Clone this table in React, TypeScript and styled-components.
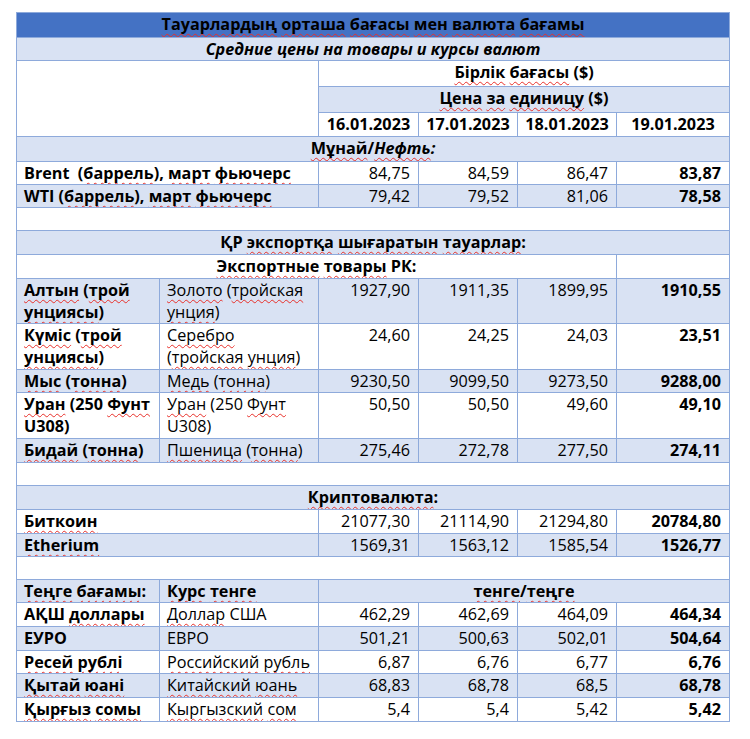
import React from "react";
import styled, { createGlobalStyle, css } from "styled-components";

const Global = createGlobalStyle`
  html, body { background: #ffffff; }
  body {
    margin: 12px 0 0 16px;
    font-family: "Open Sans", "Noto Sans", sans-serif;
    color: #000;
  }
`;

const Sheet = styled.div`
  display: grid;
  width: 714px;
  box-sizing: border-box;
  padding: 1px;
  gap: 1px;
  background: #8eaadb;
  grid-template-columns: 142px 158px 99px 98px 98px 112px;
  grid-template-rows: 24px 22px 25px 25px 23px 24px 22px 22px 22px 23px 23px 44px 45px 22px 45px 23px 22px 23px 23px 22px 22px 22px 23px 23px 22px 23px 23px;
  font-size: 16.2px;
  line-height: 22px;
`;

type Tone = "blue" | "light" | "white";

const tones: Record<Tone, string> = {
  blue: "#4472c4",
  light: "#d9e2f3",
  white: "#ffffff",
};

const Cell = styled.div<{
  $tone: Tone;
  $span?: number;
  $rows?: number;
  $align?: "left" | "center" | "right";
  $bold?: boolean;
  $italic?: boolean;
}>`
  background: ${(p) => tones[p.$tone]};
  grid-column: span ${(p) => p.$span ?? 1};
  grid-row: span ${(p) => p.$rows ?? 1};
  text-align: ${(p) => p.$align ?? "left"};
  font-weight: ${(p) => (p.$bold ? 700 : 400)};
  font-style: ${(p) => (p.$italic ? "italic" : "normal")};
  padding: 0 8px 0 7px;
  white-space: pre;
  overflow: hidden;
  min-width: 0;
  ${(p) =>
    p.$align === "center" &&
    css`
      padding: 0 2px;
    `}
`;

const Spell = styled.span`
  text-decoration-line: underline;
  text-decoration-style: wavy;
  text-decoration-color: #e8302a;
  text-decoration-thickness: 1px;
  text-underline-offset: 3px;
  text-decoration-skip-ink: none;
`;

const Ital = styled.span`
  font-style: italic;
`;

function marked(text: string): React.ReactNode[] {
  return text.split(/~([^~]+)~/).map((part, i) =>
    i % 2 === 1 ? <Spell key={i}>{part}</Spell> : <React.Fragment key={i}>{part}</React.Fragment>
  );
}

type PriceRow = { tone: Tone; values: string[] };

function Values({ tone, values }: PriceRow) {
  return (
    <>
      {values.map((v, i) => (
        <Cell key={i} $tone={tone} $align="right" $bold={i === values.length - 1}>
          {v}
        </Cell>
      ))}
    </>
  );
}

const oil: (PriceRow & { label: string })[] = [
  { label: "Brent  (~баррель~), ~март~ ~фьючерс~", tone: "white", values: ["84,75", "84,59", "86,47", "83,87"] },
  { label: "WTI (~баррель~), ~март~ ~фьючерс~", tone: "light", values: ["79,42", "79,52", "81,06", "78,58"] },
];

const goods: (PriceRow & { kz: string; ru: string })[] = [
  { kz: "~Алтын~ (~трой~\n~унциясы~)", ru: "~Золото~ (~тройская~\n~унция~)", tone: "light", values: ["1927,90", "1911,35", "1899,95", "1910,55"] },
  { kz: "~Күміс~ (~трой~\n~унциясы~)", ru: "~Серебро~\n(~тройская~ ~унция~)", tone: "white", values: ["24,60", "24,25", "24,03", "23,51"] },
  { kz: "~Мыс~ (~тонна~)", ru: "~Медь~ (~тонна~)", tone: "light", values: ["9230,50", "9099,50", "9273,50", "9288,00"] },
  { kz: "~Уран~ (250 ~Фунт~\nU308)", ru: "~Уран~ (250 ~Фунт~\nU308)", tone: "white", values: ["50,50", "50,50", "49,60", "49,10"] },
  { kz: "~Бидай~ (~тонна~)", ru: "~Пшеница~ (~тонна~)", tone: "light", values: ["275,46", "272,78", "277,50", "274,11"] },
];

const crypto: (PriceRow & { label: string })[] = [
  { label: "~Биткоин~", tone: "white", values: ["21077,30", "21114,90", "21294,80", "20784,80"] },
  { label: "~Etherium~", tone: "light", values: ["1569,31", "1563,12", "1585,54", "1526,77"] },
];

const money: (PriceRow & { kz: string; ru: string })[] = [
  { kz: "АҚШ ~доллары~", ru: "~Доллар~ США", tone: "white", values: ["462,29", "462,69", "464,09", "464,34"] },
  { kz: "ЕУРО", ru: "ЕВРО", tone: "light", values: ["501,21", "500,63", "502,01", "504,64"] },
  { kz: "~Ресей~ ~рублі~", ru: "~Российский~ ~рубль~", tone: "white", values: ["6,87", "6,76", "6,77", "6,76"] },
  { kz: "~Қытай~ ~юані~", ru: "~Китайский~ ~юань~", tone: "light", values: ["68,83", "68,78", "68,5", "68,78"] },
  { kz: "~Қырғыз~ ~сомы~", ru: "~Кыргызский~ ~сом~", tone: "white", values: ["5,4", "5,4", "5,42", "5,42"] },
];

const dates = ["16.01.2023", "17.01.2023", "18.01.2023", "19.01.2023"];

export default function App() {
  return (
    <>
      <Global />
      <Sheet>
        <Cell $tone="blue" $span={6} $align="center" $bold>
          {marked("~Тауарлардың~ ~орташа~ ~бағасы~ ~мен~ ~валюта~ ~бағамы~")}
        </Cell>
        <Cell $tone="light" $span={6} $align="center" $bold $italic>
          Средние цены на товары и курсы валют
        </Cell>

        <Cell $tone="white" $span={2} $rows={3} />
        <Cell $tone="white" $span={4} $align="center" $bold>
          {marked("~Бірлік~ ~бағасы~ ($)")}
        </Cell>
        <Cell $tone="light" $span={4} $align="center" $bold>
          {marked("~Цена~ ~за~ ~единицу~ ($)")}
        </Cell>
        {dates.map((d) => (
          <Cell key={d} $tone="white" $align="center" $bold>
            {d}
          </Cell>
        ))}

        <Cell $tone="light" $span={6} $align="center" $bold>
          <Spell>Мұнай</Spell>/<Ital><Spell>Нефть</Spell>:</Ital>
        </Cell>
        {oil.map((r) => (
          <React.Fragment key={r.label}>
            <Cell $tone={r.tone} $span={2} $bold>
              {marked(r.label)}
            </Cell>
            <Values tone={r.tone} values={r.values} />
          </React.Fragment>
        ))}
        <Cell $tone="white" $span={6} />

        <Cell $tone="light" $span={6} $align="center" $bold>
          {marked("ҚР ~экспортқа~ ~шығаратын~ ~тауарлар~:")}
        </Cell>
        <Cell $tone="white" $span={5} $align="center" $bold>
          {marked("~Экспортные~ ~товары~ РК:")}
        </Cell>
        <Cell $tone="white" />
        {goods.map((r) => (
          <React.Fragment key={r.kz}>
            <Cell $tone={r.tone} $bold>
              {marked(r.kz)}
            </Cell>
            <Cell $tone={r.tone}>{marked(r.ru)}</Cell>
            <Values tone={r.tone} values={r.values} />
          </React.Fragment>
        ))}
        <Cell $tone="white" $span={6} />

        <Cell $tone="light" $span={6} $align="center" $bold>
          {marked("~Криптовалюта~:")}
        </Cell>
        {crypto.map((r) => (
          <React.Fragment key={r.label}>
            <Cell $tone={r.tone} $span={2} $bold>
              {marked(r.label)}
            </Cell>
            <Values tone={r.tone} values={r.values} />
          </React.Fragment>
        ))}
        <Cell $tone="white" $span={6} />

        <Cell $tone="light" $bold>
          {marked("~Теңге~ ~бағамы~:")}
        </Cell>
        <Cell $tone="light" $bold>
          {marked("~Курс~ ~тенге~")}
        </Cell>
        <Cell $tone="light" $span={4} $align="center" $bold>
          {marked("~тенге~/~теңге~")}
        </Cell>
        {money.map((r) => (
          <React.Fragment key={r.kz}>
            <Cell $tone={r.tone} $bold>
              {marked(r.kz)}
            </Cell>
            <Cell $tone={r.tone}>{marked(r.ru)}</Cell>
            <Values tone={r.tone} values={r.values} />
          </React.Fragment>
        ))}
      </Sheet>
    </>
  );
}
